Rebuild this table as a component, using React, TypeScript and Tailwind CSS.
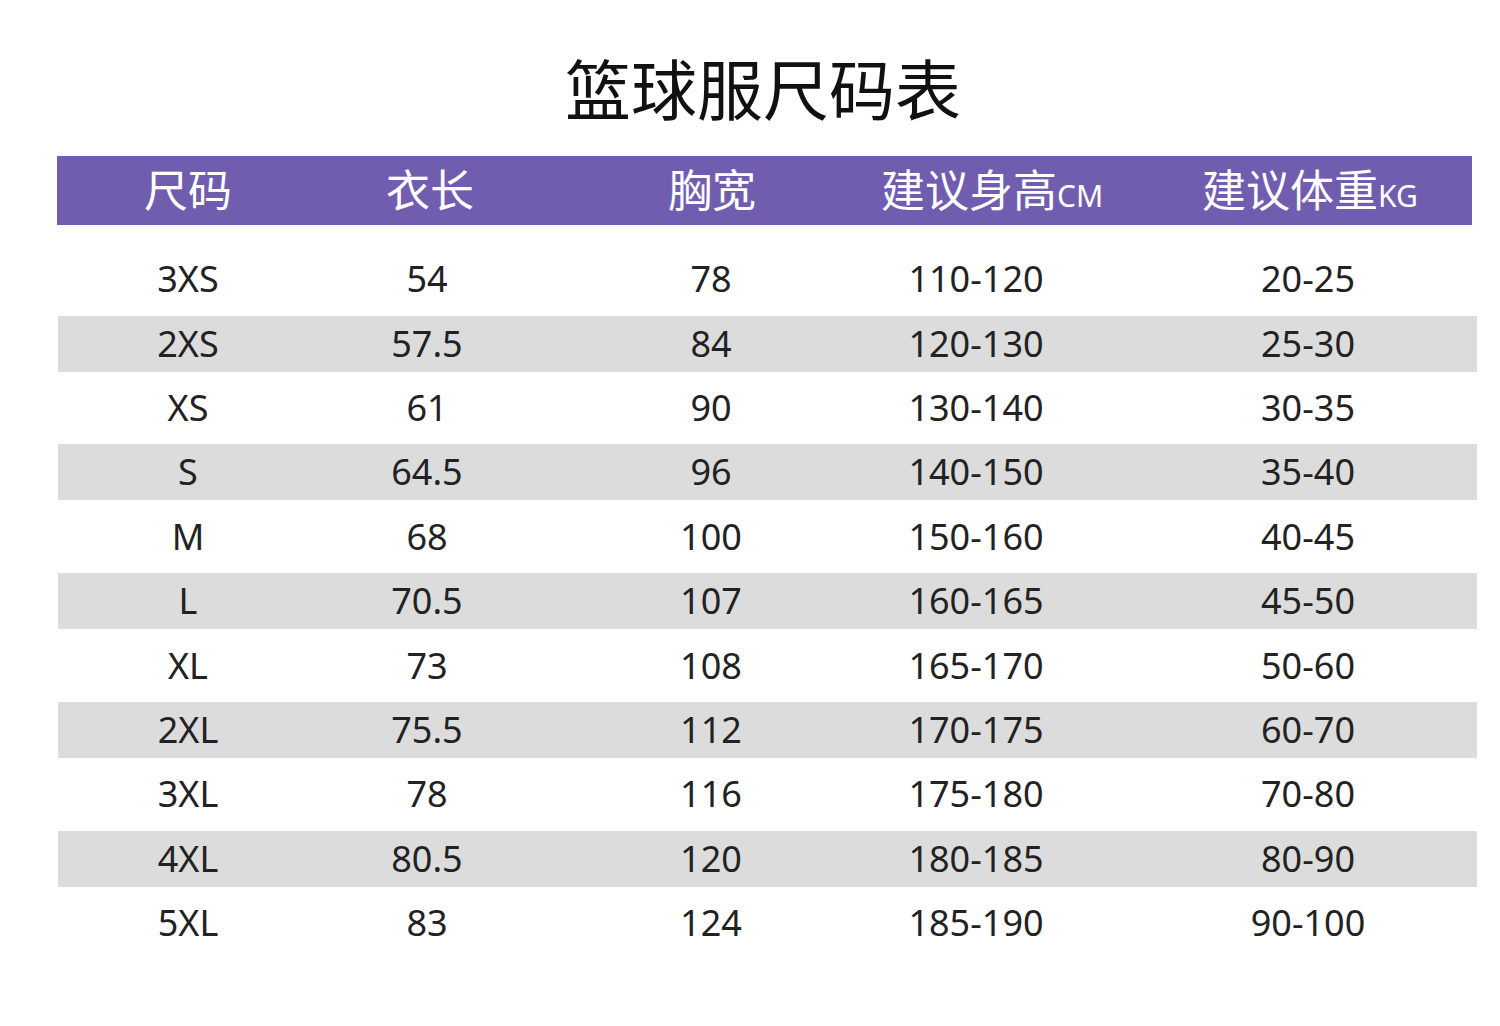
import React from "react";

const rows: string[][] = [
  ["3XS", "54", "78", "110-120", "20-25"],
  ["2XS", "57.5", "84", "120-130", "25-30"],
  ["XS", "61", "90", "130-140", "30-35"],
  ["S", "64.5", "96", "140-150", "35-40"],
  ["M", "68", "100", "150-160", "40-45"],
  ["L", "70.5", "107", "160-165", "45-50"],
  ["XL", "73", "108", "165-170", "50-60"],
  ["2XL", "75.5", "112", "170-175", "60-70"],
  ["3XL", "78", "116", "175-180", "70-80"],
  ["4XL", "80.5", "120", "180-185", "80-90"],
  ["5XL", "83", "124", "185-190", "90-100"],
];

export default function App() {
  return (
    <div className="w-[1500px] h-[1026px] bg-white overflow-hidden font-['Noto_Sans','Noto_Sans_CJK_SC',sans-serif]">
      <div className="h-[156px] pt-[53px] flex justify-center">
        <h1 className="text-[66px] leading-none font-normal text-[#111] font-['Noto_Sans_CJK_SC',sans-serif] pl-[26px]">
          篮球服尺码表
        </h1>
      </div>

      <div className="ml-[57px] w-[1415px] h-[69px] pb-[5px] bg-[#715db0] grid grid-cols-[262px_222px_342px_218px_418px] items-center text-white">
        <div className="flex justify-center text-[44px] leading-none font-['Noto_Sans_CJK_SC',sans-serif]">尺码</div>
        <div className="flex justify-center text-[44px] leading-none font-['Noto_Sans_CJK_SC',sans-serif]">衣长</div>
        <div className="flex justify-center text-[44px] leading-none font-['Noto_Sans_CJK_SC',sans-serif]">胸宽</div>
        <div className="flex justify-center items-baseline whitespace-nowrap leading-none">
          <span className="text-[44px] font-['Noto_Sans_CJK_SC',sans-serif]">建议身高</span>
          <span className="text-[30px] font-['Noto_Sans',sans-serif]">CM</span>
        </div>
        <div className="flex justify-center items-baseline whitespace-nowrap leading-none">
          <span className="text-[44px] font-['Noto_Sans_CJK_SC',sans-serif]">建议体重</span>
          <span className="text-[30px] font-['Noto_Sans',sans-serif]">KG</span>
        </div>
      </div>

      <div className="h-[22px]" />

      <div className="ml-[58px] w-[1419px]">
        {rows.map((r, i) => (
          <div key={i} className="h-[64.4px] flex items-center">
            <div
              className={
                "w-full h-[56px] grid grid-cols-[260px_218px_350px_180px_484px] items-center text-[36px] leading-none text-[#222] font-['Noto_Sans',sans-serif] " +
                (i % 2 === 1 ? "bg-[#dcdcdc]" : "bg-white")
              }
            >
              {r.map((c, j) => (
                <div key={j} className="flex justify-center whitespace-nowrap">
                  {c}
                </div>
              ))}
            </div>
          </div>
        ))}
      </div>
    </div>
  );
}
